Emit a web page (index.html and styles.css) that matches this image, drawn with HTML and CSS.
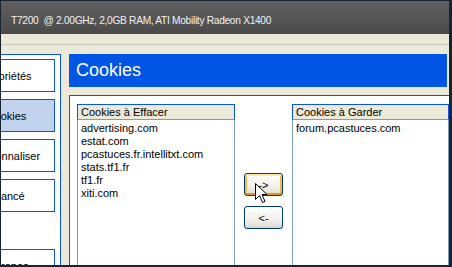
FILE: index.html
```html
<!DOCTYPE html>
<html lang="fr">
<head>
<meta charset="utf-8">
<title>Cookies</title>
<link rel="stylesheet" href="styles.css">
</head>
<body>
<div class="frame">
  <header class="topbar">T7200&nbsp; @ 2.00GHz, 2,0GB RAM, ATI Mobility Radeon X1400</header>
  <div class="toolbar"></div>
  <div class="main">
    <nav class="sidebar">
      <div class="item">Propriétés</div>
      <div class="item selected">Cookies</div>
      <div class="item">Personnaliser</div>
      <div class="item">Avancé</div>
      <div class="item last">À propos</div>
    </nav>
    <section class="content">
      <h1 class="title">Cookies</h1>
      <div class="panel">
        <div class="listbox left">
          <div class="lb-head">Cookies à Effacer</div>
          <ul class="lb-body">
            <li>advertising.com</li>
            <li>estat.com</li>
            <li>pcastuces.fr.intellitxt.com</li>
            <li>stats.tf1.fr</li>
            <li>tf1.fr</li>
            <li>xiti.com</li>
          </ul>
        </div>
        <div class="actions">
          <button class="btn hover" type="button">-&gt;</button>
          <button class="btn" type="button">&lt;-</button>
          <svg class="cursor" width="13" height="21" viewBox="0 0 13 21" aria-hidden="true">
            <path d="M0.5 0.5 L0.5 16.5 L4.5 12.5 L7.5 19.5 L10 18.5 L7 11.5 L12 11.5 Z" fill="#fff" stroke="#000" stroke-width="1" stroke-linejoin="miter"/>
          </svg>
        </div>
        <div class="listbox right">
          <div class="lb-head">Cookies à Garder</div>
          <ul class="lb-body">
            <li>forum.pcastuces.com</li>
          </ul>
        </div>
      </div>
    </section>
  </div>
</div>
</body>
</html>
```

FILE: styles.css
```css
html, body {
  margin: 0;
  padding: 0;
  background: #17232e;
}

.frame {
  width: 452px;
  height: 267px;
  box-sizing: border-box;
  border-style: solid;
  border-color: #17232e;
  border-width: 1px 3px 2px 1px;
  background: #ece9d8;
  overflow: hidden;
  display: flex;
  flex-direction: column;
  font-family: "Liberation Sans", Arial, sans-serif;
  font-size: 11px;
  color: #000;
}

.topbar {
  height: 33px;
  flex: none;
  box-sizing: border-box;
  padding-left: 10px;
  line-height: 39px;
  font-size: 10.2px;
  letter-spacing: -0.3px;
  color: #f2f2f2;
  background: linear-gradient(#616161, #4a4a4a);
  white-space: pre;
}

.toolbar {
  height: 10px;
  flex: none;
  border-bottom: 1px solid #c9c6b5;
}

.main {
  flex: 1;
  min-height: 0;
  display: flex;
  padding-top: 9px;
}

.sidebar {
  flex: none;
  width: 108px;
  margin-left: -48px;
  box-sizing: border-box;
  border: 1px solid #0a55e0;
  border-bottom: none;
  background: #fff;
  padding: 4px 5px 0 4px;
  display: flex;
  flex-direction: column;
  gap: 7px;
  overflow: hidden;
}

.item {
  flex: none;
  height: 33px;
  box-sizing: border-box;
  border: 1px solid #0a55e0;
  display: flex;
  align-items: center;
  justify-content: center;
  background: #fff;
  white-space: nowrap;
}

.item.selected {
  background: #c2d3ef;
}

.item.last {
  margin-top: 30px;
}

.content {
  flex: 1;
  min-width: 0;
  margin-left: 8px;
  display: flex;
  flex-direction: column;
}

.title {
  margin: 0 2px 0 0;
  height: 33px;
  flex: none;
  background: #0055e5;
  color: #fff;
  font-size: 18px;
  font-weight: normal;
  line-height: 33px;
  padding-left: 7px;
}

.panel {
  margin-top: 8px;
  margin-right: -40px;
  border: 1px solid #0a55e0;
  background: #fff;
  padding: 8px 0 0 7px;
  display: flex;
  gap: 9px;
  align-items: flex-start;
}

.listbox {
  flex: none;
  display: flex;
  flex-direction: column;
  height: 200px;
}

.listbox.left { width: 158px; }
.listbox.right { width: 157px; }

.lb-head {
  height: 16px;
  box-sizing: border-box;
  border: 1px solid #0a55e0;
  border-bottom-color: #7f9db9;
  background: #ece9d8;
  padding-left: 3px;
  line-height: 14px;
  white-space: nowrap;
}

.lb-body {
  flex: 1;
  margin: 0;
  list-style: none;
  border: 1px solid #7f9db9;
  border-top: none;
  padding: 2px 0 0 3px;
  line-height: 13px;
}

.actions {
  position: relative;
  flex: none;
  width: 39px;
  margin-top: 69px;
  display: flex;
  flex-direction: column;
  gap: 10px;
}

.btn {
  width: 39px;
  height: 23px;
  margin: 0;
  padding: 0;
  border: 1px solid #003c74;
  border-radius: 3px;
  background: linear-gradient(#ffffff, #f1f0eb 60%, #e3e0d6 90%, #d6d0c5);
  font-family: "Liberation Sans", Arial, sans-serif;
  font-size: 11px;
  color: #000;
}

.btn.hover {
  box-shadow: inset 0 2px 0 #fde5ab, inset 0 -2px 0 #e59a0e, inset 2px 0 0 #f8b93c, inset -2px 0 0 #f8b93c;
}

.cursor {
  position: absolute;
  left: 11px;
  top: 10px;
}
```
